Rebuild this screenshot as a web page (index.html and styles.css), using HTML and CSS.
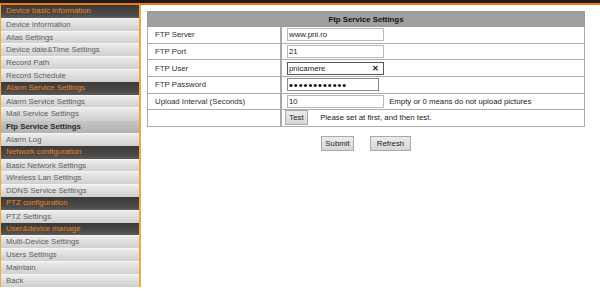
FILE: index.html
```html
<!DOCTYPE html>
<html lang="en">
<head>
    <meta charset="UTF-8">
    <title>Ftp Service Settings</title>
    <link rel="stylesheet" href="styles.css">
</head>
<body>
    <div class="topbar"></div>
    <div class="layout">
        <nav class="sidebar">
            <div class="nav-head">Device basic information</div>
            <a class="nav-item">Device information</a>
            <a class="nav-item">Alias Settings</a>
            <a class="nav-item">Device date&amp;Time Settings</a>
            <a class="nav-item">Record Path</a>
            <a class="nav-item">Record Schedule</a>
            <div class="nav-head">Alarm Service Settings</div>
            <a class="nav-item">Alarm Service Settings</a>
            <a class="nav-item">Mail Service Settings</a>
            <a class="nav-item active">Ftp Service Settings</a>
            <a class="nav-item">Alarm Log</a>
            <div class="nav-head">Network configuration</div>
            <a class="nav-item">Basic Network Settings</a>
            <a class="nav-item">Wireless Lan Settings</a>
            <a class="nav-item">DDNS Service Settings</a>
            <div class="nav-head">PTZ configuration</div>
            <a class="nav-item">PTZ Settings</a>
            <div class="nav-head">User&amp;device manage</div>
            <a class="nav-item">Multi-Device Settings</a>
            <a class="nav-item">Users Settings</a>
            <a class="nav-item">Maintain</a>
            <a class="nav-item">Back</a>
        </nav>

        <main class="content">
            <table class="settings">
                <tr>
                    <th colspan="2">Ftp Service Settings</th>
                </tr>
                <tr>
                    <td class="label">FTP Server</td>
                    <td><input class="field" type="text" value="www.pni.ro"></td>
                </tr>
                <tr>
                    <td class="label">FTP Port</td>
                    <td><input class="field" type="text" value="21"></td>
                </tr>
                <tr>
                    <td class="label">FTP User</td>
                    <td>
                        <div class="field field-user">
                            <input type="text" value="pnicamere">
                            <span class="clear">&#x2715;</span>
                        </div>
                    </td>
                </tr>
                <tr>
                    <td class="label">FTP Password</td>
                    <td><input class="field field-pass" type="password" value="abcdefghijkl"></td>
                </tr>
                <tr>
                    <td class="label">Upload Interval (Seconds)</td>
                    <td>
                        <input class="field" type="text" value="10">
                        <span class="hint">Empty or 0 means do not upload pictures</span>
                    </td>
                </tr>
                <tr>
                    <td class="label"></td>
                    <td class="test-cell">
                        <button class="btn btn-test">Test</button>
                        <span class="hint">Please set at first, and then test.</span>
                    </td>
                </tr>
            </table>
            <div class="actions">
                <button class="btn btn-submit">Submit</button>
                <button class="btn btn-refresh">Refresh</button>
            </div>
        </main>
    </div>
</body>
</html>
```

FILE: styles.css
```css
body {
    margin: 0;
    font-family: "Liberation Sans", Arial, sans-serif;
    font-size: 7.8px;
    color: #333;
    background: #fff;
}
.topbar {
    height: 5px;
    background: linear-gradient(#1c1c1c 0, #1c1c1c 3px, #f07a10 3px, #f07a10 5px);
}
.layout {
    display: flex;
}
.sidebar {
    width: 138px;
    border-left: 1px solid #f2a93b;
    border-right: 2px solid #f2a93b;
    display: flex;
    flex-direction: column;
}
.nav-head,
.nav-item {
    height: 12.8px;
    line-height: 12.8px;
    padding-left: 5px;
    white-space: nowrap;
    box-sizing: border-box;
}
.nav-head {
    background: linear-gradient(#3b3a39, #4c4a48 70%, #5e5b58);
    color: #e8821e;
}
.nav-item {
    background: linear-gradient(#ececec, #dadada 60%, #cfcfcf);
    border-top: 1px solid #f6f6f6;
    line-height: 11.8px;
    color: #606060;
    cursor: pointer;
}
.nav-item.active {
    background: linear-gradient(#c4c4c4, #b2b2b2);
    border-top-color: #d0d0d0;
    color: #2a2a2a;
    font-weight: bold;
}
.content {
    flex: 1;
    padding: 6px 0 0 6px;
}
.settings {
    width: 438px;
    border-collapse: collapse;
}
.settings th {
    height: 14px;
    padding: 0;
    background: #a0a0a0;
    border: 1px solid #9a9a9a;
    color: #111;
    font-weight: bold;
    text-align: center;
}
.settings td {
    height: 15.7px;
    padding: 0 0 0 5px;
    border: 1px solid #acacac;
    white-space: nowrap;
}
.settings td.label {
    width: 125px;
    padding-left: 7px;
    border-right: 2px solid #a8a8a8;
    color: #2e2e2e;
}
.field {
    box-sizing: border-box;
    width: 97px;
    height: 13px;
    padding: 0 1px;
    margin: 0;
    border: 1px solid #b8b8b8;
    font-family: inherit;
    font-size: 7.8px;
    color: #222;
    vertical-align: middle;
    outline: none;
}
.field-user {
    display: inline-flex;
    align-items: center;
    border-color: #555;
}
.field-user input {
    flex: 1;
    min-width: 0;
    border: 0;
    padding: 0;
    font-family: inherit;
    font-size: 7.8px;
    color: #222;
    outline: none;
}
.clear {
    font-size: 8px;
    font-weight: bold;
    color: #222;
    padding-right: 3px;
}
.field-pass {
    width: 92px;
    border-color: #8a8a8a;
    font-size: 11px;
    letter-spacing: 1px;
    color: #000;
}
.hint {
    margin-left: 3px;
    color: #222;
    vertical-align: middle;
}
.test-cell {
    vertical-align: top;
}
.btn {
    height: 15px;
    padding: 0;
    border: 1px solid #a9a9a9;
    background: linear-gradient(#ececec, #d6d6d6);
    font-family: inherit;
    font-size: 7.8px;
    color: #222;
    vertical-align: middle;
}
.btn-test {
    width: 23px;
    margin-left: -2px;
}
.test-cell .hint {
    margin-left: 10px;
}
.actions {
    width: 438px;
    display: flex;
    justify-content: center;
    gap: 16px;
    margin-top: 9px;
}
.btn-submit {
    width: 33px;
}
.btn-refresh {
    width: 41px;
}
```
